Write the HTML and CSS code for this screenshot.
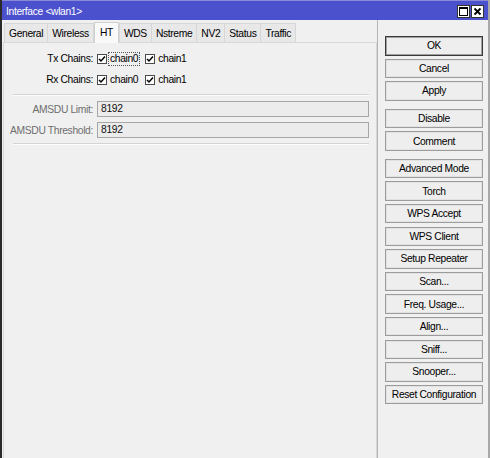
FILE: index.html
```html
<!DOCTYPE html>
<html>
<head>
<meta charset="utf-8">
<link rel="stylesheet" href="styles.css">
</head>
<body>
<div class="window">
  <div class="titlebar">
    <span class="title">Interface &lt;wlan1&gt;</span>
    <div class="tb-btns">
      <span class="tb-btn"><svg width="11" height="11" viewBox="0 0 11 11"><rect x="1.5" y="1.5" width="8" height="8" fill="none" stroke="#000" stroke-width="1"/><line x1="1.5" y1="2" x2="9.5" y2="2" stroke="#000" stroke-width="2"/></svg></span>
      <span class="tb-btn"><svg width="11" height="11" viewBox="0 0 11 11"><path d="M2.5 2.5 L8.5 8.5 M8.5 2.5 L2.5 8.5" stroke="#000" stroke-width="1.8"/></svg></span>
    </div>
  </div>
  <div class="body">
    <div class="left">
      <div class="tabs">
        <span class="tab">General</span>
        <span class="tab">Wireless</span>
        <span class="tab active">HT</span>
        <span class="tab">WDS</span>
        <span class="tab">Nstreme</span>
        <span class="tab">NV2</span>
        <span class="tab">Status</span>
        <span class="tab">Traffic</span>
      </div>
      <div class="panel">
        <div class="row chains">
          <span class="label">Tx Chains:</span>
          <label class="check"><span class="box"><svg width="8" height="8" viewBox="0 0 8 8"><path d="M1 4 L3 6 L7 1.5" fill="none" stroke="#000" stroke-width="1.5"/></svg></span><span class="ctext focus">chain0</span></label>
          <label class="check"><span class="box"><svg width="8" height="8" viewBox="0 0 8 8"><path d="M1 4 L3 6 L7 1.5" fill="none" stroke="#000" stroke-width="1.5"/></svg></span><span class="ctext">chain1</span></label>
        </div>
        <div class="row chains">
          <span class="label">Rx Chains:</span>
          <label class="check"><span class="box"><svg width="8" height="8" viewBox="0 0 8 8"><path d="M1 4 L3 6 L7 1.5" fill="none" stroke="#000" stroke-width="1.5"/></svg></span><span class="ctext">chain0</span></label>
          <label class="check"><span class="box"><svg width="8" height="8" viewBox="0 0 8 8"><path d="M1 4 L3 6 L7 1.5" fill="none" stroke="#000" stroke-width="1.5"/></svg></span><span class="ctext">chain1</span></label>
        </div>
        <div class="sep"></div>
        <div class="row field-row">
          <span class="label dis">AMSDU Limit:</span>
          <span class="field">8192</span>
        </div>
        <div class="row field-row">
          <span class="label dis">AMSDU Threshold:</span>
          <span class="field">8192</span>
        </div>
        <div class="sep sep2"></div>
      </div>
    </div>
    <div class="right">
      <div class="group">
        <span class="btn default">OK</span>
        <span class="btn">Cancel</span>
        <span class="btn">Apply</span>
      </div>
      <div class="group">
        <span class="btn">Disable</span>
        <span class="btn">Comment</span>
      </div>
      <div class="group">
        <span class="btn">Advanced Mode</span>
        <span class="btn">Torch</span>
        <span class="btn">WPS Accept</span>
        <span class="btn">WPS Client</span>
        <span class="btn">Setup Repeater</span>
        <span class="btn">Scan...</span>
        <span class="btn">Freq. Usage...</span>
        <span class="btn">Align...</span>
        <span class="btn">Sniff...</span>
        <span class="btn">Snooper...</span>
        <span class="btn">Reset Configuration</span>
      </div>
    </div>
  </div>
</div>
</body>
</html>
```

FILE: styles.css
```css
* { box-sizing: border-box; }
html, body { margin: 0; padding: 0; }
body {
  width: 490px;
  height: 458px;
  overflow: hidden;
  background: #f0f0f0;
  font-family: "Liberation Sans", Arial, sans-serif;
  font-size: 10.3px;
  letter-spacing: -0.35px;
  color: #000;
}
.window {
  width: 490px;
  height: 458px;
  display: flex;
  flex-direction: column;
  border-left: 2px solid #2a2a2a;
  border-right: 2px solid #a8a8a8;
  background: #f0f0f0;
}
.titlebar {
  height: 20px;
  background: #4b50cc;
  border-top: 1px solid #8a8ad8;
  display: flex;
  align-items: center;
  justify-content: space-between;
  padding: 0 4px 0 4px;
  color: #fff;
}
.title { padding-top: 1px; }
.tb-btns { display: flex; gap: 1px; margin-top: 1px; }
.tb-btn {
  width: 13px;
  height: 13px;
  background: #fff;
  border: 1px solid #333;
  display: flex;
  align-items: center;
  justify-content: center;
}
.body {
  flex: 1;
  display: flex;
}
.left {
  width: 375px;
  display: flex;
  flex-direction: column;
  padding-left: 1px;
}
.tabs {
  display: flex;
  height: 22px;
  align-items: flex-end;
  padding-left: 1px;
  position: relative;
  z-index: 1;
}
.tab {
  height: 19px;
  padding: 0 4px;
  display: flex;
  align-items: center;
  background: #e8e8e8;
  border: 1px solid #d6d6d6;
  border-bottom: none;
  margin-right: -1px;
}
.tab.active {
  height: 21px;
  background: #f9f9f9;
  border-color: #d0d0d0;
  margin-bottom: -1px;
  padding: 0 5px 2px;
  margin-left: 1px;
  margin-right: 0;
}
.panel {
  flex: 1;
  border: 1px solid #d8d8d8;
  border-bottom: none;
  background: #f0f0f0;
  padding: 5px 7px 0 6px;
}
.row {
  display: flex;
  align-items: center;
}
.label {
  width: 87px;
  text-align: right;
  padding-right: 4px;
  flex: none;
  white-space: nowrap;
}
.label.dis { color: #6e6e6e; }
.chains { height: 21px; }
.check {
  display: flex;
  align-items: center;
  margin-right: 5px;
}
.box {
  width: 10px;
  height: 10px;
  border: 1px solid #4a4a4a;
  background: #fff;
  display: flex;
  align-items: center;
  justify-content: center;
  margin-right: 1px;
}
.ctext {
  padding: 0 1px;
  border: 1px solid transparent;
  line-height: 12px;
}
.ctext.focus { border: 1px dotted #555; }
.sep {
  height: 2px;
  border-top: 1px solid #d4d4d4;
  border-bottom: 1px solid #fcfcfc;
  margin: 4px 0 5px 3px;
}
.sep2 { margin-top: 3px; }
.field-row { height: 16px; margin-bottom: 5px; }
.field {
  flex: 1;
  height: 16px;
  border: 1px solid #a6a6a6;
  background: #ececec;
  padding: 0 3px;
  line-height: 14px;
  color: #111;
}
.right {
  flex: 1;
  border-left: 1px solid #b4b4b4;
  padding: 16px 4px 0 7px;
  display: flex;
  flex-direction: column;
  gap: 8px;
}
.group {
  display: flex;
  flex-direction: column;
  gap: 3.1px;
}
.btn {
  height: 19.5px;
  width: 98px;
  border: 1px solid #9c9c9c;
  box-shadow: inset 0 0 0 1px #e2e2e2;
  background: #eeeeee;
  display: flex;
  align-items: center;
  justify-content: center;
  white-space: nowrap;
}
.btn.default {
  border-color: #3a3a3a;
  box-shadow: inset 0 0 0 1px #a0a0a0;
}
```
